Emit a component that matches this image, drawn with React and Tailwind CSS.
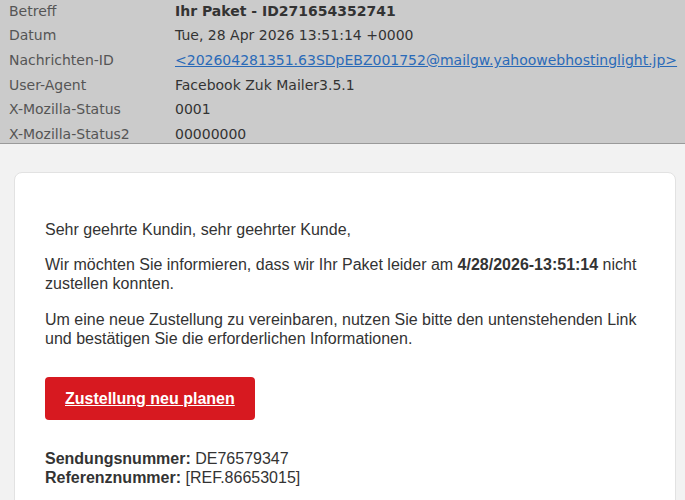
export default function App() {
  const headers = [
    ['Betreff', <span className="font-bold">Ihr Paket - ID271654352741</span>],
    ['Datum', 'Tue, 28 Apr 2026 13:51:14 +0000'],
    [
      'Nachrichten-ID',
      <a href="#" className="text-[#2a6ab8] underline">
        &lt;202604281351.63SDpEBZ001752@mailgw.yahoowebhostinglight.jp&gt;
      </a>,
    ],
    ['User-Agent', 'Facebook Zuk Mailer3.5.1'],
    ['X-Mozilla-Status', '0001'],
    ['X-Mozilla-Status2', '00000000'],
  ]

  return (
    <div className="h-[500px] overflow-hidden bg-[#f2f2f2]">
      <div className="bg-[#cbcbcb] border-b border-[#9a9a9a] h-[144px] overflow-hidden font-['DejaVu_Sans',sans-serif] text-[14px]">
        <div className="-mt-[1px]">
          {headers.map(([label, value]) => (
            <div key={label} className="flex h-[24.6px] items-center whitespace-nowrap">
              <div className="w-[175px] shrink-0 pl-[9px] text-[#555]">{label}</div>
              <div className="text-[#333]">{value}</div>
            </div>
          ))}
        </div>
      </div>

      <div className="pt-[28px] pl-[14px] pr-[9px]">
        <div className="bg-white border border-[#e2e2e2] rounded-lg px-[30px] pt-[31px] pb-8 font-['Liberation_Sans',Arial,sans-serif] text-[16px] leading-[1.2] text-[#333]">
          <p className="my-4">Sehr geehrte Kundin, sehr geehrter Kunde,</p>
          <p className="my-4">
            Wir möchten Sie informieren, dass wir Ihr Paket leider am{' '}
            <strong className="font-bold">4/28/2026-13:51:14</strong> nicht zustellen konnten.
          </p>
          <p className="my-4">
            Um eine neue Zustellung zu vereinbaren, nutzen Sie bitte den untenstehenden Link und
            bestätigen Sie die erforderlichen Informationen.
          </p>
          <div className="mt-[29px] mb-[29px]">
            <a
              href="#"
              className="inline-block bg-[#d71920] text-white font-bold underline rounded px-5 py-[12px] leading-[19px]"
            >
              Zustellung neu planen
            </a>
          </div>
          <p className="leading-[19.5px]">
            <strong>Sendungsnummer:</strong> DE76579347
            <br />
            <strong>Referenznummer:</strong> [REF.86653015]
          </p>
        </div>
      </div>
    </div>
  )
}
